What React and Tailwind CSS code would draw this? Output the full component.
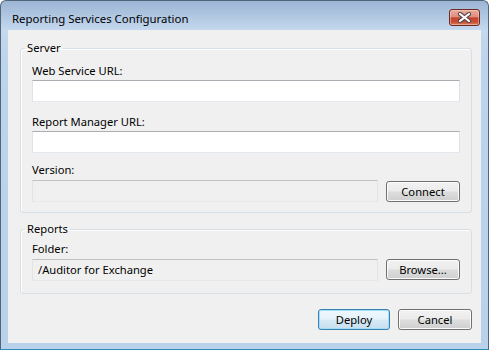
import React from "react";

const inputBase =
  "h-[22px] border border-t-[#abadb3] border-l-[#e2e3ea] border-r-[#dbdfe6] border-b-[#e3e9ef]";
const roBase =
  "h-[22px] border border-t-[#c2c2c2] border-l-[#e3e3e3] border-r-[#e3e3e3] border-b-[#e8e8e8] bg-[#f0f0f0]";
const btn =
  "rounded-[3px] border border-[#707070] shadow-[inset_0_0_0_1px_#fbfbfb] bg-[linear-gradient(to_bottom,#f2f2f2_0%,#ebebeb_48%,#dddddd_52%,#cfcfcf_100%)] text-[11.2px] leading-none text-black flex items-center justify-center";

function Group({ title, children, className = "" }) {
  return (
    <fieldset
      className={`rounded-[3px] border border-[#d5dfe5] shadow-[inset_1px_1px_0_#ffffff] px-[4px] ${className}`}
    >
      <legend className="px-[2px] text-[11.2px] leading-[14px] text-black">{title}</legend>
      <div className="px-[7px]">{children}</div>
    </fieldset>
  );
}

export default function App() {
  return (
    <div className="w-[489px] h-[350px] font-['Noto_Sans',sans-serif] text-[11.2px]">
      <div className="w-full h-full flex flex-col border border-[#51657b] border-b-[#2f8fb3] rounded-t-[6px] bg-[linear-gradient(to_bottom,#9cb5d4_0px,#c4d8ee_29px,#bed4ec_60px,#b9d1ea_100%)]">
        {/* Title bar */}
        <div className="h-[29px] flex items-start">
          <div className="ml-[11px] mt-[10px] leading-[15px] text-black flex-1 text-[11.4px]">
            Reporting Services Configuration
          </div>
          <div className="mt-[8px] mr-[8px] w-[31px] h-[17px] rounded-[3px] border border-[#6b2c25] shadow-[inset_0_0_0_1px_rgba(255,220,210,0.45)] bg-[linear-gradient(to_bottom,#eaaa9c_0%,#df8f7d_45%,#c5452e_52%,#c84e35_80%,#d9825f_100%)] flex items-center justify-center">
            <svg width="15" height="11" viewBox="0 0 15 11">
              <path d="M3 2 L12 9 M12 2 L3 9" stroke="#5a4848" strokeWidth="4.2" strokeLinecap="round" />
              <path d="M3 2 L12 9 M12 2 L3 9" stroke="#ffffff" strokeWidth="2.2" strokeLinecap="round" />
            </svg>
          </div>
        </div>

        {/* Client */}
        <div className="mx-[7px] mb-[6px] flex-1 bg-[#f0f0f0] pl-[12px] pr-[9px] pt-[11px] flex flex-col">
          <Group title="Server">
            <div className="mt-[8px] leading-[15px] h-[15px]">Web Service URL:</div>
            <div className={`mt-[2px] bg-white ${inputBase}`} />
            <div className="mt-[12px] leading-[15px] h-[15px]">Report Manager URL:</div>
            <div className={`mt-[2px] bg-white ${inputBase}`} />
            <div className="mt-[9px] leading-[15px] h-[15px]">Version:</div>
            <div className="mt-[3px] flex items-start gap-[8px] pb-[10px]">
              <div className={`flex-1 ${roBase}`} />
              <button className={`mt-[1px] w-[74px] h-[21px] ${btn}`}>Connect</button>
            </div>
          </Group>

          <Group title="Reports" className="mt-[9px]">
            <div className="mt-[5px] leading-[15px] h-[15px]">Folder:</div>
            <div className="mt-[3px] flex items-start gap-[8px] pb-[12px]">
              <div className={`flex-1 flex items-center pl-[5px] text-black ${roBase}`}>
                /Auditor for Exchange
              </div>
              <button className={`w-[74px] h-[21px] ${btn}`}>Browse...</button>
            </div>
          </Group>

          <div className="mt-[15px] flex justify-end gap-[8px]">
            <button
              className="w-[72px] h-[21px] rounded-[3px] border border-[#3c7fb1] shadow-[inset_0_0_0_1px_#9fe0f8] bg-[linear-gradient(to_bottom,#eef7fc_0%,#e6f2fa_48%,#d6e9f5_52%,#c8dfee_100%)] text-[11.2px] leading-none text-black flex items-center justify-center"
            >
              Deploy
            </button>
            <button className={`w-[74px] h-[21px] ${btn}`}>Cancel</button>
          </div>
        </div>
      </div>
    </div>
  );
}
